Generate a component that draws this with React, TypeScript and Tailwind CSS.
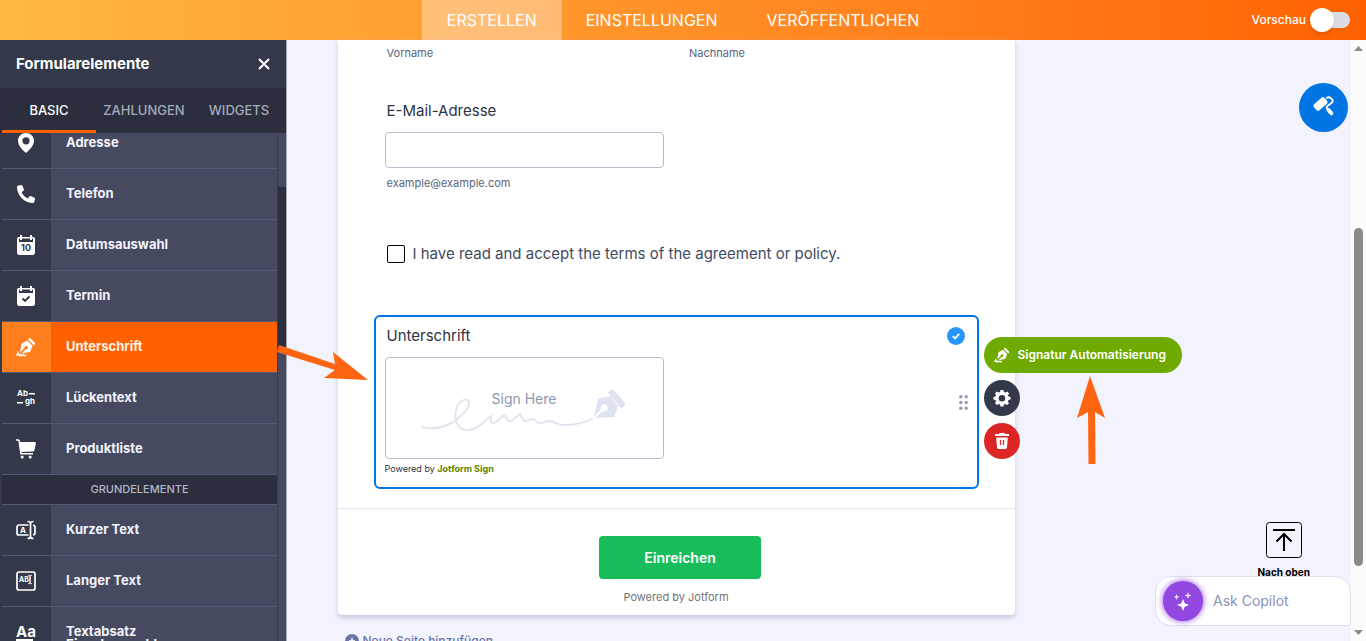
import type { ReactNode } from 'react';
import { FaPhone } from 'react-icons/fa';

const PinIcon = () => (
  <svg width="18" height="22" viewBox="0 0 18 22" fill="currentColor">
    <path
      fillRule="evenodd"
      d="M9 1C4.6 1 1 4.3 1 8.700c0 4.700 4.500 9.300 8 12.300 3.500-3 8-7.600 8-12.300C17 4.300 13.400 1 9 1zm0 4.200a3.600 3.600 0 1 1 0 7.200 3.600 3.600 0 0 1 0-7.200z"
    />
  </svg>
);

const CalendarIcon = ({ children }: { children: ReactNode }) => (
  <svg width="20" height="22" viewBox="0 0 20 22">
    <path
      fill="currentColor"
      fillRule="evenodd"
      d="M4 1h2v2h8V1h2v2h1.200C18.400 3 19 3.800 19 5v13.500c0 1.400-.9 2.500-2.300 2.500H3.300C1.900 21 1 19.900 1 18.500V5c0-1.200.6-2 1.800-2H4zM3 4.500V8h14V4.500h-1V6h-2V4.500H6V6H4V4.500z"
    />
    {children}
  </svg>
);

const PenIcon = ({ size = 20 }: { size?: number }) => (
  <svg width={size} height={size} viewBox="0 0 20 20" fill="none" className="shrink-0">
    <path fill="currentColor" d="M12.800 1.600c.7-.7 1.400-.7 2 0l3.900 4.100c.6.600.6 1.200 0 1.800l-.8.700-5.800-5.800z" />
    <path
      fill="currentColor"
      fillRule="evenodd"
      d="M11.300 3.400l5.300 5.300-2 5c-.3.700-.7 1-1.300 1.200L5.500 16.500l4.300-4.200a1.700 1.700 0 1 0-1.300-1.300L4 15.500 5.500 7.500c.2-.7.500-1.200 1.200-1.500z"
    />
    <path stroke="currentColor" strokeWidth="1.300" d="M.8 18.800l1.200-3.300 1.300 3.300 1.500-1.300 1 1.300 1.700-1.200 1 1.200 1.500-1" />
  </svg>
);

const BlankIcon = () => (
  <svg width="20" height="18" viewBox="0 0 20 18" fill="currentColor">
    <text x="1" y="7" className="font-['Inter'] text-[8px] font-bold">Ab</text>
    <rect x="13" y="4" width="6" height="1.500" />
    <rect x="1" y="13" width="6" height="1.500" />
    <text x="9" y="15" className="font-['Inter'] text-[8px] font-bold">gh</text>
  </svg>
);

const CartIcon = () => (
  <svg width="20" height="20" viewBox="0 0 20 20" fill="none">
    <path d="M0 1h2.200c.6 0 .9.300 1 .9L5 14.800h12" stroke="currentColor" strokeWidth="1.600" />
    <path d="M3 3h15.500c1 0 1.500.5 1.300 1.500L18.500 11c-.2 1-.7 1.500-1.700 1.600L4.500 13z" fill="currentColor" />
    <circle cx="6.200" cy="18" r="1.500" fill="currentColor" />
    <circle cx="14.200" cy="18" r="1.500" fill="currentColor" />
  </svg>
);

const ShortTextIcon = () => (
  <svg width="20" height="20" viewBox="0 0 20 20" fill="none" stroke="currentColor" strokeWidth="1.700">
    <path d="M12.500 5H3a2 2 0 0 0-2 2v6a2 2 0 0 0 2 2h9.500M17 5.300c1.400 0 2 .6 2 1.700v6c0 1.100-.6 1.700-2 1.700" />
    <path d="M11.500 1.500c1.800 0 3 .5 3 2v13c0 1.500-1.200 2-3 2M17.500 1.500c-1.800 0-3 .5-3 2v13c0 1.500 1.200 2 3 2" />
    <text x="4" y="13" stroke="none" fill="currentColor" className="font-['Inter'] text-[8px] font-bold">A</text>
  </svg>
);

const LongTextIcon = () => (
  <svg width="20" height="20" viewBox="0 0 20 20" fill="none" stroke="currentColor">
    <rect x="1" y="1" width="18" height="18" rx="2" strokeWidth="1.700" />
    <path d="M12 4.300c1.200 0 2 .2 2 1v6.400c0 .8-.8 1-2 1M16 4.300c-1.200 0-2 .2-2 1v6.400c0 .8.800 1 2 1" />
    <text x="3" y="11" stroke="none" fill="currentColor" className="font-['Inter'] text-[7px] font-bold">AB</text>
  </svg>
);

const ParagraphIcon = () => (
  <svg width="20" height="18" viewBox="0 0 20 18" fill="currentColor">
    <text x="0" y="14" className="font-['Inter'] text-[15px] font-bold">Aa</text>
    <rect x="0" y="16" width="17" height="2" />
  </svg>
);

interface FormElement {
  label: string;
  icon: ReactNode;
  active?: boolean;
}

const basicElements: FormElement[] = [
  { label: 'Adresse', icon: <PinIcon /> },
  { label: 'Telefon', icon: <FaPhone size={18} className="-scale-x-100" /> },
  {
    label: 'Datumsauswahl',
    icon: (
      <CalendarIcon>
        <text x="10" y="17" textAnchor="middle" fill="#31354a" className="font-['Inter'] text-[9px] font-bold">10</text>
      </CalendarIcon>
    ),
  },
  {
    label: 'Termin',
    icon: (
      <CalendarIcon>
        <path d="M6.500 13.500l2.500 2.500 4.500-4.500" fill="none" stroke="#31354a" strokeWidth="1.900" />
      </CalendarIcon>
    ),
  },
  { label: 'Unterschrift', icon: <PenIcon />, active: true },
  { label: 'Lückentext', icon: <BlankIcon /> },
  { label: 'Produktliste', icon: <CartIcon /> },
];

const textElements: FormElement[] = [
  { label: 'Kurzer Text', icon: <ShortTextIcon /> },
  { label: 'Langer Text', icon: <LongTextIcon /> },
  { label: 'Textabsatz', icon: <ParagraphIcon /> },
];

const ElementRow = ({ label, icon, active }: FormElement) => (
  <li>
    <button
      className={`flex h-[51px] w-full items-stretch border-b border-[#525a75] text-left text-[13px] font-bold ${
        active ? 'bg-[#ff6100] text-[#fff0e6]' : 'bg-[#454a60] text-[#f3f3fe]'
      }`}
    >
      <span className={`flex w-[49px] items-center justify-center pr-px text-white ${active ? 'bg-[#ff7f1f]' : 'bg-[#33384b]'}`}>
        {icon}
      </span>
      <span className="flex items-center pl-[15px]">{label}</span>
    </button>
  </li>
);

const Sidebar = () => (
  <aside className="relative flex w-[287px] shrink-0 flex-col overflow-hidden border-r border-[#a9abbd] bg-[#33384b] text-white">
    <div className="flex h-12 shrink-0 items-center justify-between px-4">
      <h2 className="text-[15px] font-bold">Formularelemente</h2>
      <button aria-label="Schließen">
        <svg width="12" height="12" viewBox="0 0 12 12" stroke="currentColor" strokeWidth="2">
          <path d="M1 1l10 10M11 1L1 11" />
        </svg>
      </button>
    </div>
    <div className="flex h-[45px] shrink-0 bg-[#2b2e3d] pl-0.5 text-[13px] font-medium text-[#a5aabb]">
      <button className="w-[94px] border-b-3 border-[#ff6100] pt-[3px] text-white">BASIC</button>
      <button className="w-[96px]">ZAHLUNGEN</button>
      <button className="flex-1">WIDGETS</button>
    </div>
    <div className="flex min-h-0 flex-1">
      <div className="flex min-h-0 flex-1 flex-col overflow-hidden border-l-2 border-[#33384b]">
        {/* List is scrolled a little past its first entry */}
        <ul className="-mt-[15px]">
          {basicElements.map((item) => (
            <ElementRow key={item.label} {...item} />
          ))}
        </ul>
        <h3 className="flex h-[30px] shrink-0 items-center justify-center border-b border-[#525a75] bg-[#2b2e3d] text-[11px] font-medium text-[#b4b8c8]">
          GRUNDELEMENTE
        </h3>
        <ul>
          {textElements.map((item) => (
            <ElementRow key={item.label} {...item} />
          ))}
        </ul>
      </div>
      <div className="w-[9px] border-l border-[#393d51] bg-[#454a60]">
        <div className="mt-[54px] h-[160px] bg-[#2b2e3d]" />
      </div>
    </div>
    <div className="absolute bottom-0 left-[66px] h-[3px] overflow-hidden text-[13px] leading-[13px] font-bold">
      Einzelauswahl
    </div>
  </aside>
);

const Header = () => (
  <header className="grid h-10 shrink-0 grid-cols-[1fr_auto_1fr] bg-linear-to-r from-[#ffb83f] to-[#ff6100] text-white">
    <nav className="col-start-2 flex pb-px text-base">
      <a href="#" className="-mb-px flex items-center bg-white/35 px-[25px]">ERSTELLEN</a>
      <a href="#" className="flex items-center px-6">EINSTELLUNGEN</a>
      <a href="#" className="flex items-center px-[25px]">VERÖFFENTLICHEN</a>
    </nav>
    <label className="flex items-center justify-end gap-1 pr-4 text-xs font-medium">
      Vorschau
      <span className="relative flex h-6 w-10 items-center">
        <input type="checkbox" role="switch" className="ml-2 h-4 w-8 appearance-none rounded-full bg-[#dadbe5]" />
        <span className="absolute left-0 size-6 rounded-full bg-white shadow-md" />
      </span>
    </label>
  </header>
);

const SignatureDrawing = () => (
  <svg width="204" height="46" viewBox="0 0 204 46" fill="none" className="absolute top-8 left-[35px]">
    <path
      d="M1 37c12 3 25 0 34-7C44 23 49 17 48 12c-1-4-9-3-12 5-4 12 0 22 9 23 12 1 21-12 25-14-1 7 1 9 5 6 5-3 7-8 9-6 2 5 5 7 9 3l6-5c2 5 4 9 9 6 4-2 5-1 8 2 4 3 8-1 12-1 5 0 7 4 15 4 10 0 20-2 28-6"
      stroke="#dfe3f0"
      strokeWidth="1.800"
      strokeLinecap="round"
    />
    <path
      fill="#dfe3f0"
      fillRule="evenodd"
      d="M177 9l12-3 8 10-4 11-19 1 8-7a3.500 3.500 0 1 0-2-2l-7 8z"
    />
    <path fill="#dfe3f0" d="M189 0l3-1 13 15-4 4-1 0-13-15z" />
  </svg>
);

const SignatureField = () => (
  <section className="relative mx-9 mt-[49px] h-[174px] rounded-md border-2 border-[#0075e3] px-[9px] pt-[7px]">
    <div className="flex items-center justify-between pr-[3px] pl-0.5">
      <h3 className="text-[15px] leading-6 text-[#2c3345]">Unterschrift</h3>
      <svg width="18" height="18" viewBox="0 0 18 18">
        <circle cx="9" cy="9" r="9" fill="#2596ff" />
        <path d="M5.800 9.200L8 11.400l4.200-4.600" fill="none" stroke="#fff" strokeWidth="1.800" />
      </svg>
    </div>
    <div className="mt-[9px] flex items-center justify-between">
      <button type="button" className="relative h-[102px] w-[279px] rounded border border-[#b8bdcd]">
        <SignatureDrawing />
        <span className="relative -top-2.5 text-sm text-[#8d99b3]">Sign Here</span>
      </button>
      <svg width="9" height="15" viewBox="0 0 9 15" fill="#979db0" className="-mt-3">
        <circle cx="1.800" cy="1.800" r="1.700" />
        <circle cx="7.200" cy="1.800" r="1.700" />
        <circle cx="1.800" cy="7.500" r="1.700" />
        <circle cx="7.200" cy="7.500" r="1.700" />
        <circle cx="1.800" cy="13.200" r="1.700" />
        <circle cx="7.200" cy="13.200" r="1.700" />
      </svg>
    </div>
    <p className="mt-0.5 text-[9px] leading-4 text-[#2c3345]">
      Powered by <a href="#" className="font-bold text-[#5f8200]">Jotform Sign</a>
    </p>

    {/* Field actions float beside the selected field */}
    <div className="absolute top-5 left-full ml-[7px] flex flex-col items-start gap-[7px] text-white">
      <button type="button" className="flex h-9 items-center gap-2 rounded-full bg-[#6faa00] pr-4 pl-2.5 text-xs font-semibold whitespace-nowrap">
        <PenIcon size={16} />
        Signatur Automatisierung
      </button>
      <button type="button" aria-label="Einstellungen" className="flex size-9 items-center justify-center rounded-full bg-[#33384b]">
        <svg width="18" height="18" viewBox="0 0 18 18">
          <path
            fill="currentColor"
            fillRule="evenodd"
            d="M7.500 1h3l.5 2 1.400.6L14.200 2.500l1.900 1.900L15 6.200l.5 1.300 2 .5v2.500l-2 .6-.6 1.300 1.100 1.800-1.900 1.900-1.800-1.100-1.300.5-.5 2h-3l-.5-2-1.300-.5-1.800 1.100L2 14.200l1-1.800-.5-1.300-2-.6V8l2-.5L3 6.200 2 4.400l1.800-1.900L5.600 3.600 7 3zM9 5.900a3.300 3.300 0 1 0 0 6.600 3.300 3.300 0 0 0 0-6.600z"
          />
        </svg>
      </button>
      <button type="button" aria-label="Löschen" className="flex size-9 items-center justify-center rounded-full bg-[#dc2626]">
        <svg width="14" height="18" viewBox="0 0 14 18">
          <path fill="currentColor" d="M4.500 1h5l.7 1H14v2H0V2h3.800zM1.200 5.500h11.600l-.8 9.700c-.1 1.200-.8 1.800-2 1.800H4c-1.200 0-1.900-.6-2-1.800z" />
          <path d="M5.500 8v5M8.500 8v5" stroke="#dc2626" strokeWidth="1.300" />
        </svg>
      </button>
    </div>

    <svg width="94" height="40" viewBox="0 0 94 40" fill="#ff6411" className="absolute top-[27px] -left-[99px]">
      <path d="M2 1l56 19-2-12 35 28-44-2 11-8L0 8z" />
    </svg>
    <svg width="30" height="90" viewBox="0 0 30 90" fill="#ff6411" className="absolute top-[58px] left-[700px]">
      <path d="M14 1l15 42-10-6 .5 52h-7L12 37 1 43z" />
    </svg>
  </section>
);

const FormCard = () => (
  <form className="mx-auto w-full max-w-[677px] rounded-b bg-white text-[#2c3345] shadow-[0_3px_5px_#c6cade]">
    <div className="grid grid-cols-2 gap-[26px] px-[49px] pt-[5px] text-[11px] leading-4 text-[#57647e]">
      <span>Vorname</span>
      <span>Nachname</span>
    </div>
    <div className="mt-[38px] px-[47px]">
      <label htmlFor="email" className="block pl-0.5 text-[15px] leading-6">E-Mail-Adresse</label>
      <input id="email" type="email" className="mt-[9px] block h-9 w-[279px] rounded border border-[#b8bdcd] px-2" />
      <span className="mt-[7px] block pl-0.5 text-[11px] leading-4 text-[#57647e]">example@example.com</span>
    </div>
    <label className="mt-[51px] flex items-center gap-2 px-[49px] text-[15px] leading-6 text-[#434a60]">
      <input type="checkbox" className="size-[18px] appearance-none rounded-[2px] border border-black" />
      I have read and accept the terms of the agreement or policy.
    </label>
    <SignatureField />
    <div className="mt-[19px] flex flex-col items-center border-t border-[#e3e5f2] pt-[27px] pb-2.5">
      <button type="button" className="ml-2 h-[43px] w-[162px] rounded bg-[#18bd5b] text-sm font-semibold text-white">
        Einreichen
      </button>
      <span className="mt-2.5 text-[11px] leading-4 text-[#737373]">Powered by Jotform</span>
    </div>
  </form>
);

const RightRail = () => (
  <div className="flex w-[286px] shrink-0 flex-col items-end">
    <button aria-label="Formular-Designer" className="mt-[43px] mr-[3px] flex size-[49px] items-center justify-center rounded-full bg-[#0075e3]">
      <svg width="24" height="24" viewBox="0 0 24 24" fill="none">
        <rect x="1.500" y="4" width="14" height="8" rx="2" transform="rotate(-42 8.500 8)" fill="#fff" />
        <path d="M14.500 2.500c1-1.800 3-1.500 4-.5s2.800 1.500 2.300 3.300c-.6 2-4.500 3.500-5.800 5.200-.6 1-.3 2 .8 2.500" stroke="#fff" strokeWidth="1.900" />
        <path d="M16.500 14l2.800 3.300" stroke="#fff" strokeWidth="4" strokeLinecap="round" />
      </svg>
    </button>
    <a href="#" className="mt-auto mr-[41px] flex flex-col items-center text-[10px] leading-4 font-bold text-black">
      <svg width="36" height="36" viewBox="0 0 36 36" fill="none" stroke="currentColor" className="mb-1.5">
        <rect x=".5" y=".5" width="35" height="35" rx="3" />
        <path d="M7 8h22M18 29V12M10.500 19.500L18 12l7.500 7.500" strokeWidth="2" />
      </svg>
      Nach oben
    </a>
    <div className="relative -mt-1 mb-[15px] flex h-[50px] w-[196px] items-center gap-2.5 rounded-2xl rounded-br-sm border border-[#dfe0ec] bg-white pl-[7px]">
      <span className="flex size-10 shrink-0 items-center justify-center rounded-full bg-[#9147e0] shadow-[0_0_6px_#9147e0]">
        <svg width="20" height="20" viewBox="0 0 20 20" fill="#fff">
          <path d="M10 8l1.700 4.300L16 14l-4.300 1.700L10 20l-1.700-4.300L4 14l4.300-1.700z" />
          <path opacity=".8" d="M15 1l1 2.500 2.500 1-2.500 1L15 8l-1-2.500-2.500-1 2.500-1zM3.500 3l.9 2 2.100.9-2.100.9-.9 2.100-.9-2.100-2-.9 2-.9z" />
        </svg>
      </span>
      <input
        aria-label="Ask Copilot"
        placeholder="Ask Copilot"
        className="w-full min-w-0 bg-transparent text-sm placeholder:text-[#8b93ba] focus:outline-none"
      />
    </div>
  </div>
);

const ScrollBar = () => (
  <div className="flex w-[15px] shrink-0 flex-col items-center bg-[#fcfcfc] py-1.5">
    <svg width="9" height="5" viewBox="0 0 9 5" fill="#8b8b8b">
      <path d="M0 5l4.500-5L9 5z" />
    </svg>
    <div className="mt-[177px] h-[338px] w-[9px] rounded-full bg-[#8b8b8b]" />
    <svg width="9" height="5" viewBox="0 0 9 5" fill="#8b8b8b" className="mt-auto">
      <path d="M0 0l4.500 5L9 0z" />
    </svg>
  </div>
);

export default function App() {
  return (
    <div className="flex h-screen flex-col overflow-hidden bg-[#f3f3fe] font-['Inter',sans-serif]">
      <Header />
      <div className="flex min-h-0 flex-1">
        <Sidebar />
        <main className="min-w-0 flex-1 px-[50px]">
          <FormCard />
          <button className="mx-auto mt-4 flex w-full max-w-[677px] items-center gap-1 pl-[7px] text-xs leading-5 font-medium text-[#6c73a8]">
            <svg width="14" height="14" viewBox="0 0 14 14">
              <circle cx="7" cy="7" r="7" fill="#6c73a8" />
              <path d="M7 4v6M4 7h6" stroke="#fff" strokeWidth="1.500" />
            </svg>
            Neue Seite hinzufügen
          </button>
        </main>
        <RightRail />
        <ScrollBar />
      </div>
    </div>
  );
}
